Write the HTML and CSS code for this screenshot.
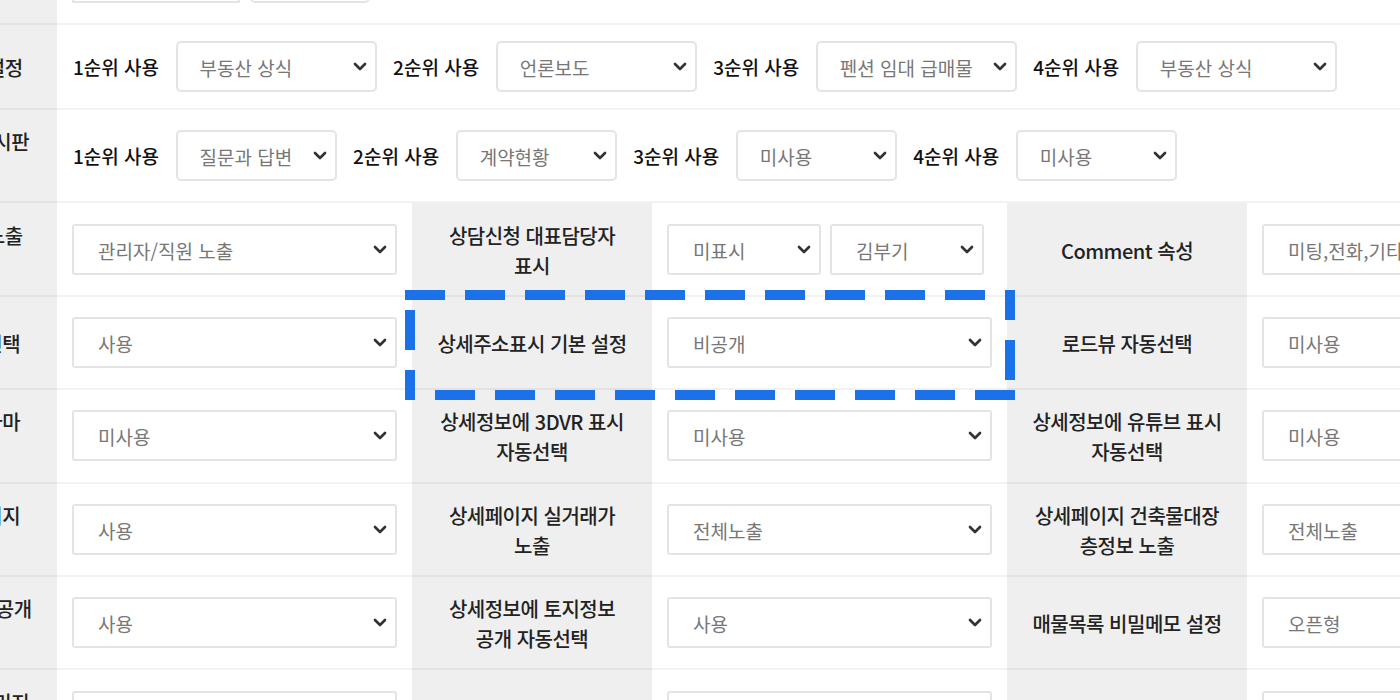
FILE: index.html
```html
<!DOCTYPE html>
<html lang="ko">
<head>
    <meta charset="UTF-8">
    <meta name="viewport" content="width=device-width, initial-scale=1.0">
    <title>매물 환경설정</title>
    <link rel="stylesheet" href="styles.css">
</head>
<body>
<div class="page">
    <div class="grid">
        <!-- 0 -->
        <div class="th">워터마크 설정</div>
        <div class="td wide row0">
            <div class="box input"></div>
            <div class="box btn"></div>
        </div>

        <!-- 1 -->
        <div class="th">추천 게시판 노출설정</div>
        <div class="td wide">
            <span class="lbl">1순위 사용</span>
            <div class="sel big w1"><span>부동산 상식</span><svg class="arr" viewBox="0 0 14 9"><path d="M2 2l5 5 5-5"/></svg></div>
            <span class="lbl">2순위 사용</span>
            <div class="sel big w1"><span>언론보도</span><svg class="arr" viewBox="0 0 14 9"><path d="M2 2l5 5 5-5"/></svg></div>
            <span class="lbl">3순위 사용</span>
            <div class="sel big w1"><span>펜션 임대 급매물</span><svg class="arr" viewBox="0 0 14 9"><path d="M2 2l5 5 5-5"/></svg></div>
            <span class="lbl">4순위 사용</span>
            <div class="sel big w1"><span>부동산 상식</span><svg class="arr" viewBox="0 0 14 9"><path d="M2 2l5 5 5-5"/></svg></div>
        </div>

        <!-- 2 -->
        <div class="th">상세페이지 관련게시판<br>노출</div>
        <div class="td wide">
            <span class="lbl">1순위 사용</span>
            <div class="sel big w2"><span>질문과 답변</span><svg class="arr" viewBox="0 0 14 9"><path d="M2 2l5 5 5-5"/></svg></div>
            <span class="lbl">2순위 사용</span>
            <div class="sel big w2"><span>계약현황</span><svg class="arr" viewBox="0 0 14 9"><path d="M2 2l5 5 5-5"/></svg></div>
            <span class="lbl">3순위 사용</span>
            <div class="sel big w2"><span>미사용</span><svg class="arr" viewBox="0 0 14 9"><path d="M2 2l5 5 5-5"/></svg></div>
            <span class="lbl">4순위 사용</span>
            <div class="sel big w2"><span>미사용</span><svg class="arr" viewBox="0 0 14 9"><path d="M2 2l5 5 5-5"/></svg></div>
        </div>

        <!-- 3 -->
        <div class="th">상담신청 담당자 노출<br>설정</div>
        <div class="td">
            <div class="sel"><span>관리자/직원 노출</span><svg class="arr" viewBox="0 0 14 9"><path d="M2 2l5 5 5-5"/></svg></div>
        </div>
        <div class="th">상담신청 대표담당자<br>표시</div>
        <div class="td">
            <div class="sel w3"><span>미표시</span><svg class="arr" viewBox="0 0 14 9"><path d="M2 2l5 5 5-5"/></svg></div>
            <div class="sel w3"><span>김부기</span><svg class="arr" viewBox="0 0 14 9"><path d="M2 2l5 5 5-5"/></svg></div>
        </div>
        <div class="th">Comment 속성</div>
        <div class="td">
            <div class="sel"><span>미팅,전화,기타,방문</span><svg class="arr" viewBox="0 0 14 9"><path d="M2 2l5 5 5-5"/></svg></div>
        </div>

        <!-- 4 -->
        <div class="th">지적편집도 자동선택</div>
        <div class="td">
            <div class="sel"><span>사용</span><svg class="arr" viewBox="0 0 14 9"><path d="M2 2l5 5 5-5"/></svg></div>
        </div>
        <div class="th">상세주소표시 기본 설정</div>
        <div class="td">
            <div class="sel"><span>비공개</span><svg class="arr" viewBox="0 0 14 9"><path d="M2 2l5 5 5-5"/></svg></div>
        </div>
        <div class="th">로드뷰 자동선택</div>
        <div class="td">
            <div class="sel"><span>미사용</span><svg class="arr" viewBox="0 0 14 9"><path d="M2 2l5 5 5-5"/></svg></div>
        </div>

        <!-- 5 -->
        <div class="th">상세정보에 파노라마<br>자동선택</div>
        <div class="td">
            <div class="sel"><span>미사용</span><svg class="arr" viewBox="0 0 14 9"><path d="M2 2l5 5 5-5"/></svg></div>
        </div>
        <div class="th">상세정보에 3DVR 표시<br>자동선택</div>
        <div class="td">
            <div class="sel"><span>미사용</span><svg class="arr" viewBox="0 0 14 9"><path d="M2 2l5 5 5-5"/></svg></div>
        </div>
        <div class="th">상세정보에 유튜브 표시<br>자동선택</div>
        <div class="td">
            <div class="sel"><span>미사용</span><svg class="arr" viewBox="0 0 14 9"><path d="M2 2l5 5 5-5"/></svg></div>
        </div>

        <!-- 6 -->
        <div class="th">매물상세 안내페이지<br>노출</div>
        <div class="td">
            <div class="sel"><span>사용</span><svg class="arr" viewBox="0 0 14 9"><path d="M2 2l5 5 5-5"/></svg></div>
        </div>
        <div class="th">상세페이지 실거래가<br>노출</div>
        <div class="td">
            <div class="sel"><span>전체노출</span><svg class="arr" viewBox="0 0 14 9"><path d="M2 2l5 5 5-5"/></svg></div>
        </div>
        <div class="th">상세페이지 건축물대장<br>층정보 노출</div>
        <div class="td">
            <div class="sel"><span>전체노출</span><svg class="arr" viewBox="0 0 14 9"><path d="M2 2l5 5 5-5"/></svg></div>
        </div>

        <!-- 7 -->
        <div class="th">중개사무소 연락처 공개<br>여부</div>
        <div class="td">
            <div class="sel"><span>사용</span><svg class="arr" viewBox="0 0 14 9"><path d="M2 2l5 5 5-5"/></svg></div>
        </div>
        <div class="th">상세정보에 토지정보<br>공개 자동선택</div>
        <div class="td">
            <div class="sel"><span>사용</span><svg class="arr" viewBox="0 0 14 9"><path d="M2 2l5 5 5-5"/></svg></div>
        </div>
        <div class="th">매물목록 비밀메모 설정</div>
        <div class="td">
            <div class="sel"><span>오픈형</span><svg class="arr" viewBox="0 0 14 9"><path d="M2 2l5 5 5-5"/></svg></div>
        </div>

        <!-- 8 -->
        <div class="th">상세페이지 대표이미지<br>설정</div>
        <div class="td">
            <div class="sel"><span>사용</span><svg class="arr" viewBox="0 0 14 9"><path d="M2 2l5 5 5-5"/></svg></div>
        </div>
        <div class="th">매물 공유 설정</div>
        <div class="td">
            <div class="sel"><span>사용</span><svg class="arr" viewBox="0 0 14 9"><path d="M2 2l5 5 5-5"/></svg></div>
        </div>
        <div class="th">지도 기본 설정</div>
        <div class="td">
            <div class="sel"><span>일반지도</span><svg class="arr" viewBox="0 0 14 9"><path d="M2 2l5 5 5-5"/></svg></div>
        </div>
    </div>

    <!-- 강조 표시 -->
    <svg class="mark" width="1400" height="700" viewBox="0 0 1400 700">
        <line x1="405" y1="295" x2="1015" y2="295"/>
        <line x1="1010" y1="290" x2="1010" y2="400" class="r"/>
        <line x1="435" y1="395" x2="1015" y2="395"/>
        <line x1="410" y1="310" x2="410" y2="400"/>
    </svg>
</div>
</body>
</html>
```

FILE: styles.css
```css
html, body {
    margin: 0;
    padding: 0;
}
body {
    width: 1400px;
    height: 700px;
    overflow: hidden;
    background-color: #fff;
    font-family: "Noto Sans CJK KR", "Noto Sans", sans-serif;
    color: #222;
}
.page {
    position: relative;
    width: 1400px;
    height: 700px;
    overflow: hidden;
}
.grid {
    display: grid;
    grid-template-columns: 240px 355px 240px 355px 240px 355px;
    grid-template-rows: 93.4px 85px repeat(7, 93.4px);
    width: 1785px;
    margin: -68.4px 0 0 -183px;
}
.th, .td {
    box-sizing: border-box;
    display: flex;
    align-items: center;
    border-bottom: 2px solid rgba(0, 0, 0, 0.05);
}
.th {
    justify-content: center;
    text-align: center;
    padding: 3px 8px 0;
    background-color: #efefef;
    font-size: 20px;
    font-weight: 500;
    line-height: 30px;
    letter-spacing: -0.5px;
    color: #222;
    white-space: nowrap;
}
.td {
    padding: 0 15px;
    gap: 9px;
}
.wide {
    grid-column: span 5;
    gap: 16.5px;
    padding-left: 16px;
}
.row0 {
    gap: 10px;
    padding-left: 15px;
}
.lbl {
    font-size: 19px;
    font-weight: 500;
    color: #111;
    white-space: nowrap;
}
.box {
    box-sizing: border-box;
    height: 51px;
    border: 2px solid #e4e4e4;
    background-color: #fff;
}
.input {
    width: 168px;
}
.btn {
    width: 120px;
    border-radius: 5px;
}
.sel {
    box-sizing: border-box;
    display: flex;
    align-items: center;
    justify-content: space-between;
    width: 100%;
    height: 51px;
    padding: 2px 8px 0 24px;
    border: 2px solid #e4e4e4;
    border-radius: 3px;
    background-color: #fff;
    font-size: 19px;
    color: #777;
    white-space: nowrap;
    overflow: hidden;
}
.sel.big {
    border-radius: 5px;
    padding-left: 22px;
}
.w1 {
    width: 201px;
    flex: none;
}
.w2 {
    width: 161px;
    flex: none;
}
.w3 {
    width: 154px;
    flex: none;
}
.arr {
    flex: none;
    width: 14px;
    height: 9px;
    margin: -2px 0 0 8px;
}
.arr path {
    fill: none;
    stroke: #333;
    stroke-width: 2.7;
    stroke-linecap: round;
    stroke-linejoin: round;
}
.mark {
    position: absolute;
    top: 0;
    left: 0;
    pointer-events: none;
}
.mark line {
    stroke: #1b72e8;
    stroke-width: 10;
    stroke-dasharray: 40 20;
}
.mark .r {
    stroke-dashoffset: 10;
}
```
